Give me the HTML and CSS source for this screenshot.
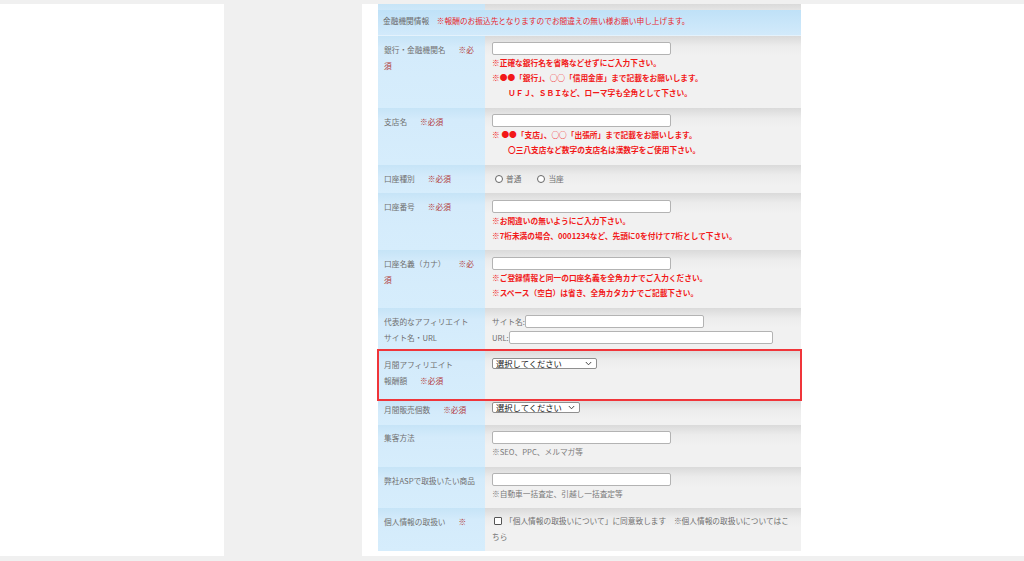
FILE: index.html
```html
<!DOCTYPE html>
<html lang="ja">
<head>
<meta charset="utf-8">
<title>金融機関情報</title>
<link rel="stylesheet" href="styles.css">
</head>
<body>
<div class="page">
  <div class="side-left"></div>
  <div class="side-gap"></div>
  <div class="main">
    <div class="form">
      <div class="row row--stub"><div class="label"></div><div class="field"></div></div>

      <div class="head">金融機関情報　<span class="head-note">※報酬のお振込先となりますのでお間違えの無い様お願い申し上げます。</span></div>

      <div class="row row--bank">
        <div class="label">銀行・金融機関名<span class="req">※必</span><span class="req-tail">須</span></div>
        <div class="field">
          <input class="text" type="text">
          <p class="note">※正確な銀行名を省略などせずにご入力下さい。</p>
          <p class="note">※●●「銀行」、○○「信用金庫」まで記載をお願いします。</p>
          <p class="note note--indent">ＵＦＪ、ＳＢＩなど、ローマ字も全角として下さい。</p>
        </div>
      </div>

      <div class="row row--branch">
        <div class="label">支店名<span class="req">※必須</span></div>
        <div class="field">
          <input class="text" type="text">
          <p class="note">※ ●●「支店」、○○「出張所」まで記載をお願いします。</p>
          <p class="note note--indent">〇三八支店など数字の支店名は漢数字をご使用下さい。</p>
        </div>
      </div>

      <div class="row row--type">
        <div class="label">口座種別<span class="req">※必須</span></div>
        <div class="field">
          <div class="radios">
            <label class="opt"><input class="radio" type="radio" name="kind">普通</label>
            <label class="opt"><input class="radio" type="radio" name="kind">当座</label>
          </div>
        </div>
      </div>

      <div class="row row--number">
        <div class="label">口座番号<span class="req">※必須</span></div>
        <div class="field field--p7">
          <input class="text" type="text">
          <p class="note">※お間違いの無いようにご入力下さい。</p>
          <p class="note">※7桁未満の場合、0001234など、先頭に0を付けて7桁として下さい。</p>
        </div>
      </div>

      <div class="row row--holder">
        <div class="label">口座名義（カナ）<span class="req">※必</span><span class="req-tail">須</span></div>
        <div class="field field--p7">
          <input class="text" type="text">
          <p class="note">※ご登録情報と同一の口座名義を全角カナでご入力ください。</p>
          <p class="note">※スペース（空白）は省き、全角カタカナでご記載下さい。</p>
        </div>
      </div>

      <div class="row row--site">
        <div class="label">代表的なアフィリエイト<br>サイト名・URL</div>
        <div class="field field--p7">
          <div class="pair">サイト名:<input class="text text--site" type="text"></div>
          <div class="pair pair--url">URL:<input class="text text--url" type="text"></div>
        </div>
      </div>

      <div class="row row--reward">
        <div class="label label--p7">月間アフィリエイト<br>報酬額<span class="req">※必須</span></div>
        <div class="field field--p8">
          <div class="select select--wide">
            <select class="select-box"><option>選択してください</option></select>
            <svg class="chev" width="7" height="5" viewBox="0 0 7 5"><path d="M0.8 1 L3.5 3.8 L6.2 1" fill="none" stroke="#333" stroke-width="0.9"/></svg>
          </div>
        </div>
      </div>

      <div class="row row--count">
        <div class="label label--p2">月間販売個数<span class="req">※必須</span></div>
        <div class="field field--p2">
          <div class="select select--narrow">
            <select class="select-box"><option>選択してください</option></select>
            <svg class="chev" width="7" height="5" viewBox="0 0 7 5"><path d="M0.8 1 L3.5 3.8 L6.2 1" fill="none" stroke="#333" stroke-width="0.9"/></svg>
          </div>
        </div>
      </div>

      <div class="row row--method">
        <div class="label label--p5">集客方法</div>
        <div class="field">
          <input class="text" type="text">
          <p class="hint">※SEO、PPC、メルマガ等</p>
        </div>
      </div>

      <div class="row row--goods">
        <div class="label">弊社ASPで取扱いたい商品</div>
        <div class="field">
          <input class="text" type="text">
          <p class="hint">※自動車一括査定、引越し一括査定等</p>
        </div>
      </div>

      <div class="row row--privacy">
        <div class="label">個人情報の取扱い<span class="req">※</span></div>
        <div class="field field--agree">
          <input class="check" type="checkbox"><span class="agree">「個人情報の取扱いについて」に同意致します　※個人情報の取扱いについてはこちら</span>
        </div>
      </div>
    </div>
  </div>
</div>
</body>
</html>
```

FILE: styles.css
```css
html, body {
  margin: 0;
  padding: 0;
}

body {
  background: #f0f0f0;
  font-family: "Noto Sans CJK JP", "Noto Sans", sans-serif;
  font-size: 7.7px;
  color: #707070;
}

.page {
  display: flex;
  height: 552px;
  padding: 4px 0 5px;
}

.side-left {
  width: 224px;
  background: #fff;
}

.side-gap {
  width: 138px;
  background: #f0f0f0;
}

.main {
  flex: 1;
  background: #fff;
  padding-left: 16px;
  overflow: hidden;
}

.form {
  width: 423px;
}

.row {
  display: grid;
  grid-template-columns: 107px 316px;
}

.label {
  background: linear-gradient(#c6e4f7, #d4ebfb 12px, #d6edfc);
  padding: 6px 6px 0 6px;
  line-height: 16px;
  color: #707070;
}

.label--p2 { padding-top: 2px; }
.label--p5 { padding-top: 5px; }
.label--p7 { padding-top: 7px; }

.req {
  margin-left: 13px;
  color: #b23a3a;
}

.req-tail {
  color: #b23a3a;
}

.field {
  background: linear-gradient(#dadada, #ececec 10px, #f1f1f1 20px);
  padding: 6px 8px 0 7px;
}

.field--p2 { padding-top: 2px; }
.field--p7 { padding-top: 7px; }
.field--p8 { padding-top: 8px; }

.row--stub { height: 3px; }
.row--bank { height: 72px; }
.row--branch { height: 57px; }
.row--type { height: 28px; }
.row--number { height: 57px; }
.row--holder { height: 58px; }
.row--site { height: 42px; }
.row--reward {
  height: 50px;
  outline: 2px solid #f0353a;
  outline-offset: -1px;
  position: relative;
  z-index: 1;
}
.row--count { height: 25px; }
.row--method { height: 42px; }
.row--goods { height: 41px; }
.row--privacy { height: 43px; }

.head {
  height: 29px;
  line-height: 28px;
  padding-left: 5px;
  background: linear-gradient(#bde0f7, #d2eafb);
  border-bottom: 1px solid #e4f2fc;
  box-sizing: border-box;
  color: #6a6a6a;
}

.head-note {
  color: #e8262b;
}

.text {
  display: block;
  box-sizing: border-box;
  width: 179px;
  height: 13px;
  margin: 0;
  padding: 0 3px;
  border: 1px solid #b3b3b3;
  border-radius: 2px;
  background: #fff;
  font: inherit;
}

.note {
  margin: 0;
  line-height: 15px;
  color: #f21818;
  font-weight: bold;
}

.note--indent {
  padding-left: 16px;
}

.hint {
  margin: 0;
  line-height: 15px;
  color: #7a7a7a;
}

.radios {
  display: flex;
  align-items: center;
  height: 15px;
}

.opt {
  display: flex;
  align-items: center;
  margin-right: 13px;
  color: #707070;
}

.radio {
  appearance: none;
  -webkit-appearance: none;
  box-sizing: border-box;
  width: 8px;
  height: 8px;
  margin: 0 3px 0 3px;
  border: 1px solid #666;
  border-radius: 50%;
  background: #fff;
}

.pair {
  display: flex;
  align-items: center;
  height: 13px;
  color: #707070;
}

.pair--url {
  margin-top: 3px;
}

.text--site {
  width: 179px;
  display: inline-block;
}

.text--url {
  width: 264px;
  display: inline-block;
}

.select {
  display: flex;
  align-items: center;
  box-sizing: border-box;
  height: 11px;
  border: 1px solid #8f8f8f;
  border-radius: 2px;
  background: #fff;
}

.select--wide { width: 105px; }
.select--narrow { width: 88px; }

.select-box {
  appearance: none;
  -webkit-appearance: none;
  flex: 1;
  min-width: 0;
  height: 9px;
  margin: 0;
  padding: 0 0 0 3px;
  border: 0;
  background: transparent;
  font-family: inherit;
  font-size: 8.3px;
  line-height: 9px;
  color: #111;
}

.chev {
  flex: none;
  margin-right: 4px;
}

.field--agree {
  padding-top: 5px;
  padding-right: 8px;
  line-height: 16px;
}

.check {
  appearance: none;
  -webkit-appearance: none;
  box-sizing: border-box;
  width: 8px;
  height: 8px;
  margin: 0 3px 0 2px;
  vertical-align: -1px;
  border: 1px solid #555;
  border-radius: 1px;
  background: #fff;
}

.agree {
  color: #707070;
}
```
